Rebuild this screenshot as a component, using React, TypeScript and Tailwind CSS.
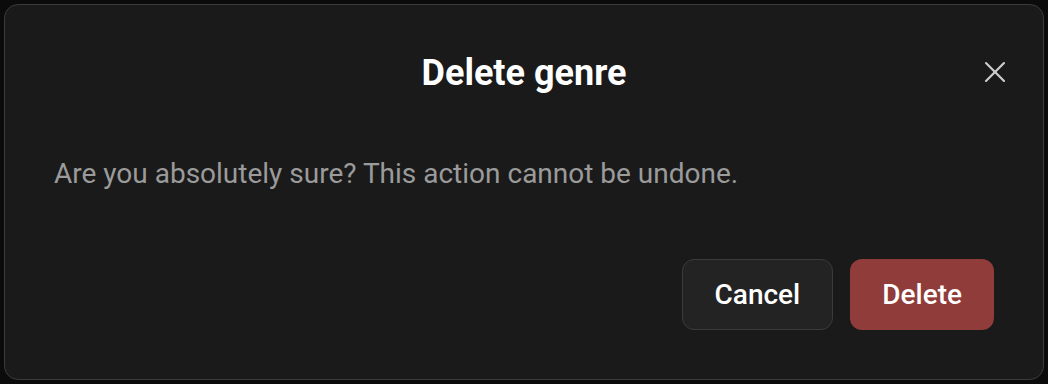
import { X } from "lucide-react";

export default function App() {
  return (
    <div className="h-[384px] w-[1048px] bg-[#0b0b0b] p-[4px] font-['Roboto',sans-serif]">
      <div className="relative flex h-[376px] flex-col rounded-[14px] border border-[#3b3b3b] bg-[#1a1a1a] px-[49px] pt-[44px] pb-[49px]">
        <h2 className="text-center text-[36px] font-bold leading-[48px] text-white">
          Delete genre
        </h2>
        <button className="absolute top-[49px] right-[30px] flex h-[36px] w-[36px] items-center justify-center text-[#cfcfcf]">
          <X size={36} strokeWidth={1.4} />
        </button>
        <p className="mt-[59px] text-[28px] leading-[36px] text-[#9b9b9b]">
          Are you absolutely sure? This action cannot be undone.
        </p>
        <div className="mt-auto flex justify-end gap-[17px]">
          <button className="h-[71px] rounded-[12px] border border-[#3b3b3b] bg-[#232323] px-[32px] text-[28px] font-medium text-white">
            Cancel
          </button>
          <button className="h-[71px] rounded-[12px] bg-[#8f3c3a] px-[32px] text-[28px] font-medium text-white">
            Delete
          </button>
        </div>
      </div>
    </div>
  );
}
